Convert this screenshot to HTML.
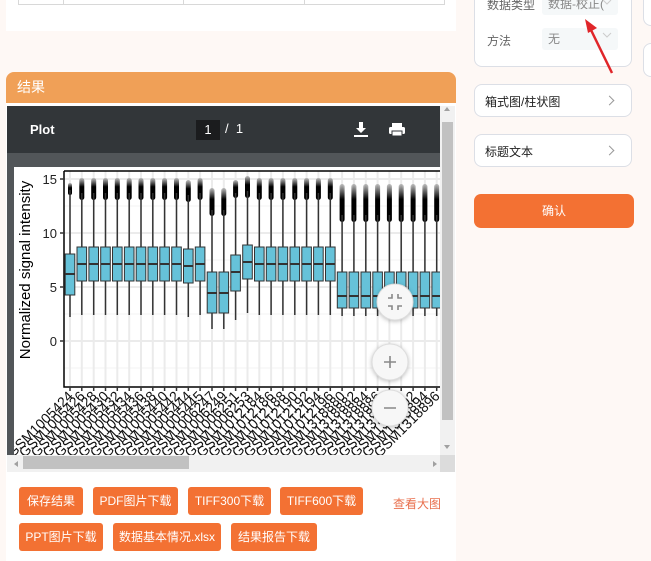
<!DOCTYPE html>
<html><head><meta charset="utf-8"><style>
body{margin:0;width:651px;height:561px;overflow:hidden;background:#fef8f5;font-family:"Liberation Sans","Noto Sans CJK SC",sans-serif;position:relative}
.a{position:absolute}
.btn{position:absolute;background:#f37133;color:#fff;font-size:12px;border-radius:3px;height:28px;line-height:28px;text-align:center}
.rb{position:absolute;background:#fff;border:1px solid #dcdfe6;border-radius:8px;box-sizing:border-box}
.rb span{position:absolute;left:10px;top:8px;font-size:12px;color:#222}
.rb i{position:absolute;right:18px;top:12px;width:6px;height:6px;border-top:1px solid #999;border-right:1px solid #999;transform:rotate(45deg)}
</style></head><body>
<div class="a" style="left:6px;top:0;width:450px;height:31px;background:#fff"></div>
<div class="a" style="left:18px;top:-2px;width:425px;height:6px;border:1px solid #d8d8d8;border-top:none"></div>
<div class="a" style="left:63px;top:0;width:1px;height:5px;background:#d8d8d8"></div>
<div class="a" style="left:183px;top:0;width:1px;height:5px;background:#d8d8d8"></div>
<div class="a" style="left:304px;top:0;width:1px;height:5px;background:#d8d8d8"></div>

<div class="a" style="left:6px;top:72px;width:450px;height:31px;background:#f0a057;border-radius:8px 8px 0 0;color:#fff;font-size:14px;line-height:31px;padding-left:11px;box-sizing:border-box">结果</div>
<div class="a" style="left:6px;top:103px;width:450px;height:458px;background:#fff"></div>
<div class="a" style="left:7px;top:106px;width:433px;height:349px;background:linear-gradient(#55595c,#525659 20px)"></div>
<div class="a" style="left:7px;top:106px;width:433px;height:47px;background:#323639"></div>
<div class="a" style="left:30px;top:122px;color:#fff;font-size:13px;font-weight:bold">Plot</div>
<div class="a" style="left:196px;top:120px;width:24px;height:20px;background:#1b1c1e;color:#fff;font-size:13px;line-height:20px;text-align:center">1</div>
<div class="a" style="left:225px;top:121px;color:#fff;font-size:13px">/&nbsp; 1</div>
<svg class="a" style="left:352px;top:120px" width="60" height="20"><path d="M7 2h4v6h3l-5 5-5-5h3z" fill="#fff"/><rect x="2" y="15" width="14" height="2" fill="#fff"/><rect x="40" y="3" width="10" height="4" fill="#fff"/><rect x="37" y="7" width="16" height="7" rx="1.5" fill="#fff"/><rect x="40" y="11" width="10" height="5" fill="#fff" stroke="#323639"/></svg>
<div class="a" style="left:440px;top:106px;width:15px;height:349px;background:#f1f1f1"></div>
<div class="a" style="left:442px;top:122px;width:11px;height:298px;background:#c1c1c1"></div>
<div class="a" style="left:7px;top:455px;width:433px;height:17px;background:#f1f1f1"></div>
<div class="a" style="left:23px;top:456px;width:166px;height:13px;background:#c1c1c1"></div>
<div class="a" style="left:440px;top:455px;width:15px;height:17px;background:#dcdcdc"></div>

<svg class="a" style="left:0;top:0" width="651" height="561" font-family="Liberation Sans,sans-serif">
<defs>
<clipPath id="c"><rect x="14" y="167" width="426" height="288"/></clipPath>
<linearGradient id="og" x1="0" y1="0" x2="0" y2="1"><stop offset="0" stop-color="#000" stop-opacity=".2"/><stop offset=".4" stop-color="#000"/><stop offset="1" stop-color="#000"/></linearGradient>
<g id="bn"><rect x="-2.5" y="178" width="5" height="22" rx="2.5" fill="url(#og)"/><line x1="0" y1="193" x2="0" y2="315" stroke="#333" stroke-width="1.5"/><rect x="-4.8" y="247" width="9.6" height="34" fill="#66c2d9" stroke="#333"/><line x1="-4.8" x2="4.8" y1="264" y2="264" stroke="#333" stroke-width="2"/></g>
<g id="b0"><rect x="-2" y="183" width="4" height="12" rx="2" fill="url(#og)"/><line x1="0" y1="190" x2="0" y2="317" stroke="#333" stroke-width="1.5"/><rect x="-4.8" y="254" width="9.6" height="41" fill="#66c2d9" stroke="#333"/><line x1="-4.8" x2="4.8" y1="274" y2="274" stroke="#333" stroke-width="2"/></g>
<g id="b12"><rect x="-2.5" y="188" width="5" height="28" rx="2.5" fill="url(#og)"/><line x1="0" y1="210" x2="0" y2="329" stroke="#333" stroke-width="1.5"/><rect x="-4.8" y="272" width="9.6" height="41" fill="#66c2d9" stroke="#333"/><line x1="-4.8" x2="4.8" y1="293" y2="293" stroke="#333" stroke-width="2"/></g>
<g id="b14"><rect x="-2.5" y="180" width="5" height="18" rx="2.5" fill="url(#og)"/><line x1="0" y1="193" x2="0" y2="320" stroke="#333" stroke-width="1.5"/><rect x="-4.8" y="255" width="9.6" height="36" fill="#66c2d9" stroke="#333"/><line x1="-4.8" x2="4.8" y1="272" y2="272" stroke="#333" stroke-width="2"/></g>
<g id="bl"><rect x="-2.5" y="184" width="5" height="38" rx="2.5" fill="url(#og)"/><line x1="0" y1="215" x2="0" y2="316" stroke="#333" stroke-width="1.5"/><rect x="-4.8" y="272" width="9.6" height="36" fill="#66c2d9" stroke="#333"/><line x1="-4.8" x2="4.8" y1="296" y2="296" stroke="#333" stroke-width="2"/></g>
</defs>
<rect x="14" y="167" width="426" height="288" fill="#fff"/>
<g clip-path="url(#c)">
<g stroke="#ebebeb" stroke-width="2"><line x1="64" x2="440" y1="179" y2="179"/><line x1="64" x2="440" y1="233" y2="233"/><line x1="64" x2="440" y1="287" y2="287"/><line x1="64" x2="440" y1="341" y2="341"/></g>
<g stroke="#f3f3f3"><line x1="64" x2="440" y1="206" y2="206"/><line x1="64" x2="440" y1="260" y2="260"/><line x1="64" x2="440" y1="314" y2="314"/><line x1="64" x2="440" y1="368" y2="368"/></g>
<g stroke="#ebebeb" stroke-width="2">
<path d="M70 171V386M81.8 171V386M93.7 171V386M105.5 171V386M117.3 171V386M129.2 171V386M141 171V386M152.8 171V386M164.6 171V386M176.5 171V386M188.3 171V386M200.1 171V386M212 171V386M223.8 171V386M235.6 171V386M247.5 171V386M259.3 171V386M271.1 171V386M282.9 171V386M294.8 171V386M306.6 171V386M318.4 171V386M330.3 171V386M342.1 171V386M353.9 171V386M365.8 171V386M377.6 171V386M389.4 171V386M401.2 171V386M413.1 171V386M424.9 171V386M436.7 171V386"/></g>
<use href="#b0" x="70"/><use href="#bn" x="81.8"/><use href="#bn" x="93.7"/><use href="#bn" x="105.5"/><use href="#bn" x="117.3"/><use href="#bn" x="129.2"/><use href="#bn" x="141"/><use href="#bn" x="152.8"/><use href="#bn" x="164.6"/><use href="#bn" x="176.5"/><use href="#bn" x="188.3" y="2"/><use href="#bn" x="200.1"/><use href="#b12" x="212"/><use href="#b12" x="223.8"/><use href="#b14" x="235.6"/><use href="#bn" x="247.5" y="-2"/><use href="#bn" x="259.3"/><use href="#bn" x="271.1"/><use href="#bn" x="282.9"/><use href="#bn" x="294.8"/><use href="#bn" x="306.6"/><use href="#bn" x="318.4"/><use href="#bn" x="330.3"/><use href="#bl" x="342.1"/><use href="#bl" x="353.9"/><use href="#bl" x="365.8"/><use href="#bl" x="377.6"/><use href="#bl" x="389.4"/><use href="#bl" x="401.2"/><use href="#bl" x="413.1"/><use href="#bl" x="424.9"/><use href="#bl" x="436.7"/>
<path d="M64 171H440M64 171V387H440" fill="none" stroke="#000" stroke-width="1.5"/>
<path d="M70 387v4M81.8 387v4M93.7 387v4M105.5 387v4M117.3 387v4M129.2 387v4M141 387v4M152.8 387v4M164.6 387v4M176.5 387v4M188.3 387v4M200.1 387v4M212 387v4M223.8 387v4M235.6 387v4M247.5 387v4M259.3 387v4M271.1 387v4M282.9 387v4M294.8 387v4M306.6 387v4M318.4 387v4M330.3 387v4M342.1 387v4M353.9 387v4M365.8 387v4M377.6 387v4M389.4 387v4M401.2 387v4M413.1 387v4M424.9 387v4M436.7 387v4M60 179h4M60 233h4M60 287h4M60 341h4" stroke="#333" stroke-width="1.5"/>
<g font-size="13" fill="#222" text-anchor="end"><text x="57" y="184">15</text><text x="57" y="238">10</text><text x="57" y="292">5</text><text x="57" y="346">0</text></g>
<text transform="translate(30 270) rotate(-90)" font-size="15" text-anchor="middle" fill="#000">Normalized signal intensity</text>
<g font-size="14" fill="#111" text-anchor="end">
<text transform="translate(74 397) rotate(-45)">GSM1005424</text><text transform="translate(85.8 397) rotate(-45)">GSM1005426</text><text transform="translate(97.7 397) rotate(-45)">GSM1005428</text><text transform="translate(109.5 397) rotate(-45)">GSM1005430</text><text transform="translate(121.3 397) rotate(-45)">GSM1005432</text><text transform="translate(133.2 397) rotate(-45)">GSM1005434</text><text transform="translate(145 397) rotate(-45)">GSM1005436</text><text transform="translate(156.8 397) rotate(-45)">GSM1005438</text><text transform="translate(168.6 397) rotate(-45)">GSM1005440</text><text transform="translate(180.5 397) rotate(-45)">GSM1005442</text><text transform="translate(192.3 397) rotate(-45)">GSM1005444</text><text transform="translate(204.1 397) rotate(-45)">GSM1005445</text><text transform="translate(216 397) rotate(-45)">GSM1006247</text><text transform="translate(227.8 397) rotate(-45)">GSM1006249</text><text transform="translate(239.6 397) rotate(-45)">GSM1006251</text><text transform="translate(251.5 397) rotate(-45)">GSM1006253</text><text transform="translate(263.3 397) rotate(-45)">GSM1012184</text><text transform="translate(275.1 397) rotate(-45)">GSM1012186</text><text transform="translate(286.9 397) rotate(-45)">GSM1012188</text><text transform="translate(298.8 397) rotate(-45)">GSM1012190</text><text transform="translate(310.6 397) rotate(-45)">GSM1012192</text><text transform="translate(322.4 397) rotate(-45)">GSM1012194</text><text transform="translate(334.3 397) rotate(-45)">GSM1012196</text><text transform="translate(346.1 397) rotate(-45)">GSM1318880</text><text transform="translate(357.9 397) rotate(-45)">GSM1318882</text><text transform="translate(369.8 397) rotate(-45)">GSM1318884</text><text transform="translate(381.6 397) rotate(-45)">GSM1318886</text><text transform="translate(393.4 397) rotate(-45)">GSM1318888</text><text transform="translate(405.2 397) rotate(-45)">GSM1318890</text><text transform="translate(417.1 397) rotate(-45)">GSM1318892</text><text transform="translate(428.9 397) rotate(-45)">GSM1318894</text><text transform="translate(440.7 397) rotate(-45)">GSM1318896</text>
</g>
</g>
<g fill="#f7f7f7" stroke="#ddd" style="filter:drop-shadow(0 1px 2px rgba(0,0,0,.25))"><circle cx="395" cy="302" r="18"/><circle cx="390" cy="362" r="18"/><circle cx="390" cy="408" r="18"/></g>
<g stroke="#888" stroke-width="1.6" fill="none"><path d="M388 298h4v-4M402 298h-4v-4M388 306h4v4M402 306h-4v4"/><path d="M384 362h12M390 356v12M384 408h12"/></g>
<path d="M444 111l3-4 3 4zM444 445l3 4 3-4zM14 464l4-3v6zM433 461l4 3-4 3z" fill="#a0a0a0"/>
</svg>

<div class="btn" style="left:19px;top:487px;width:64px">保存结果</div>
<div class="btn" style="left:93px;top:487px;width:85px">PDF图片下载</div>
<div class="btn" style="left:188px;top:487px;width:83px">TIFF300下载</div>
<div class="btn" style="left:280px;top:487px;width:83px">TIFF600下载</div>
<div class="a" style="left:393px;top:495px;font-size:12px;color:#e9704e">查看大图</div>
<div class="btn" style="left:19px;top:523px;width:84px">PPT图片下载</div>
<div class="btn" style="left:113px;top:523px;width:108px">数据基本情况.xlsx</div>
<div class="btn" style="left:231px;top:523px;width:86px">结果报告下载</div>

<div class="rb" style="left:474px;top:-10px;width:158px;height:77px"></div>
<div class="a" style="left:487px;top:-4px;font-size:12px;color:#666">数据类型</div>
<div class="a" style="left:542px;top:-6px;width:76px;height:21px;background:#f5f8f9;border-radius:3px;font-size:12px;color:#888;line-height:21px;padding-left:6px;box-sizing:border-box;overflow:hidden;white-space:nowrap">数据-校正(</div>
<div class="a" style="left:487px;top:32px;font-size:12px;color:#666">方法</div>
<div class="a" style="left:542px;top:28px;width:76px;height:22px;background:#f5f8f9;border-radius:3px;font-size:12px;color:#888;line-height:22px;padding-left:6px;box-sizing:border-box">无</div>
<svg class="a" style="left:596px;top:-4px" width="22" height="50"><path d="M7 4l4 4 4-4M7 37l4 4 4-4" stroke="#ccc" fill="none"/></svg>
<div class="rb" style="left:643px;top:-10px;width:20px;height:36px"></div>
<div class="rb" style="left:643px;top:43px;width:20px;height:34px"></div>
<div class="rb" style="left:474px;top:84px;width:158px;height:33px"><span>箱式图/柱状图</span><i></i></div>
<div class="rb" style="left:474px;top:134px;width:158px;height:33px"><span>标题文本</span><i></i></div>
<div class="a" style="left:474px;top:194px;width:160px;height:34px;background:#f37133;border-radius:7px;color:#fff;font-size:12px;line-height:34px;text-align:center">确认</div>
<svg class="a" style="left:0;top:0" width="651" height="561"><line x1="612" y1="73" x2="591" y2="30" stroke="#e0262a" stroke-width="2.5"/><path d="M585 19l12 9-9 5z" fill="#e0262a"/></svg>
</body></html>
